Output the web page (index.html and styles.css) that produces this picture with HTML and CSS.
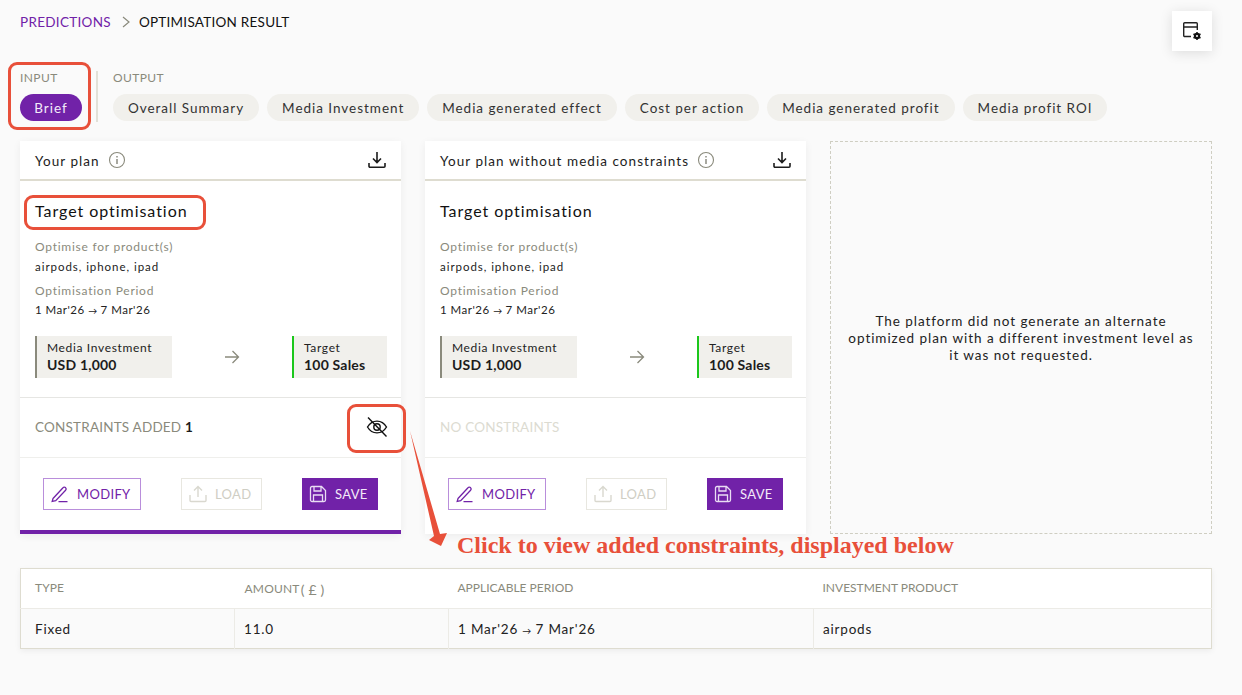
FILE: index.html
```html
<!DOCTYPE html>
<html lang="en">
<head>
<meta charset="utf-8">
<title>Optimisation result</title>
<link rel="stylesheet" href="styles.css">
</head>
<body>
<div class="page">
  <nav class="crumbs">
    <span class="crumb-link">PREDICTIONS</span>
    <svg class="crumb-sep" width="12" height="12" viewBox="0 0 12 12"><path d="M3 1l6 5-6 5" fill="none" stroke="#8a8a7c" stroke-width="1.2"/></svg>
    <span class="crumb-current">OPTIMISATION RESULT</span>
  </nav>
  <button class="float-btn" aria-label="Settings">
    <svg width="20" height="20" viewBox="0 0 20 20"><path d="M9 15.500H2.700a1 1 0 0 1-1-1V2.700a1 1 0 0 1 1-1h11.600a1 1 0 0 1 1 1V9M1.700 6h13.600" fill="none" stroke="#222" stroke-width="1.400"/><circle cx="15" cy="15" r="2.100" fill="none" stroke="#111" stroke-width="2.200"/><path d="M15 11v1.400M15 17.600V19M11.500 13l1.200.7M17.300 16.300l1.200.7M11.500 17l1.200-.7M17.300 13.700l1.200-.7" stroke="#111" stroke-width="1.500"/></svg>
  </button>

  <div class="tabs">
    <div class="tab-group input-group">
      <div class="tab-label">INPUT</div>
      <div class="pills"><span class="pill pill-active">Brief</span></div>
    </div>
    <div class="tab-group output-group">
      <div class="tab-label">OUTPUT</div>
      <div class="pills">
        <span class="pill">Overall Summary</span>
        <span class="pill">Media Investment</span>
        <span class="pill">Media generated effect</span>
        <span class="pill">Cost per action</span>
        <span class="pill">Media generated profit</span>
        <span class="pill">Media profit ROI</span>
      </div>
    </div>
  </div>

  <div class="cards">
    <section class="card card-selected">
      <header class="card-head">
        <span class="card-title">Your plan</span>
        <svg class="info" width="18" height="18" viewBox="0 0 18 18"><circle cx="9" cy="9" r="7.500" fill="none" stroke="#8a8a7c" stroke-width="1.100"/><path d="M9 8v5M9 5v1.400" stroke="#6f6f62" stroke-width="1.200"/></svg>
        <svg class="download" width="18" height="18" viewBox="0 0 18 18"><path d="M9 1v10M5 7.500l4 4 4-4M1 12v3.200a1 1 0 0 0 1 1h14a1 1 0 0 0 1-1V12" fill="none" stroke="#1c1c1c" stroke-width="1.600"/></svg>
      </header>
      <div class="card-body">
        <h2 class="target-title">Target optimisation</h2>
        <div class="meta-label">Optimise for product(s)</div>
        <div class="meta-value">airpods, iphone, ipad</div>
        <div class="meta-label second">Optimisation Period</div>
        <div class="meta-value">1 Mar'26 <span class="to">→</span> 7 Mar'26</div>
        <div class="flow">
          <div class="stat stat-invest"><div class="stat-label">Media Investment</div><div class="stat-value">USD 1,000</div></div>
          <svg class="flow-arrow" width="16" height="14" viewBox="0 0 16 14"><path d="M1 7h13.500M8.500 1l6 6-6 6" fill="none" stroke="#8a8a7c" stroke-width="1.300"/></svg>
          <div class="stat stat-target"><div class="stat-label">Target</div><div class="stat-value">100 Sales</div></div>
        </div>
      </div>
      <div class="constraints">
        <span class="constraints-text">CONSTRAINTS ADDED <b>1</b></span>
        <svg class="eye" width="22" height="22" viewBox="0 0 22 22"><path d="M1.500 11c2.300-3.900 5.500-5.900 9.500-5.900s7.200 2 9.500 5.900c-2.300 3.900-5.500 5.900-9.500 5.900S3.800 14.900 1.500 11z" fill="none" stroke="#111" stroke-width="1.400"/><circle cx="11" cy="11" r="3.200" fill="none" stroke="#111" stroke-width="1.400"/><path d="M2 1.500l18.500 19" stroke="#111" stroke-width="1.400"/></svg>
      </div>
      <div class="actions">
        <button class="btn btn-modify"><svg width="18" height="18" viewBox="0 0 18 18"><path d="M2 13.500L12 2.700a1.700 1.700 0 0 1 2.600 0 1.800 1.800 0 0 1 0 2.500L4.700 15.600l-3.500.8zM7.500 16.700h9" fill="none" stroke="#7122a8" stroke-width="1.300"/></svg>MODIFY</button>
        <button class="btn btn-load"><svg width="18" height="18" viewBox="0 0 18 18"><path d="M9 12V1.500M5 5.500l4-4 4 4M1 10v5.500a1 1 0 0 0 1 1h14a1 1 0 0 0 1-1V10" fill="none" stroke="#d9d8cf" stroke-width="1.400"/></svg>LOAD</button>
        <button class="btn btn-save"><svg width="18" height="18" viewBox="0 0 18 18"><path d="M1.500 3a1.500 1.500 0 0 1 1.500-1.500h9.500l4 4V15a1.500 1.500 0 0 1-1.500 1.500H3A1.500 1.500 0 0 1 1.500 15zM5 1.500V6h7V1.500M4.500 16.500V10h9v6.500" fill="none" stroke="#e9dcf3" stroke-width="1.300"/></svg>SAVE</button>
      </div>
    </section>

    <section class="card">
      <header class="card-head">
        <span class="card-title">Your plan without media constraints</span>
        <svg class="info" width="18" height="18" viewBox="0 0 18 18"><circle cx="9" cy="9" r="7.500" fill="none" stroke="#8a8a7c" stroke-width="1.100"/><path d="M9 8v5M9 5v1.400" stroke="#6f6f62" stroke-width="1.200"/></svg>
        <svg class="download" width="18" height="18" viewBox="0 0 18 18"><path d="M9 1v10M5 7.500l4 4 4-4M1 12v3.200a1 1 0 0 0 1 1h14a1 1 0 0 0 1-1V12" fill="none" stroke="#1c1c1c" stroke-width="1.600"/></svg>
      </header>
      <div class="card-body">
        <h2 class="target-title">Target optimisation</h2>
        <div class="meta-label">Optimise for product(s)</div>
        <div class="meta-value">airpods, iphone, ipad</div>
        <div class="meta-label second">Optimisation Period</div>
        <div class="meta-value">1 Mar'26 <span class="to">→</span> 7 Mar'26</div>
        <div class="flow">
          <div class="stat stat-invest"><div class="stat-label">Media Investment</div><div class="stat-value">USD 1,000</div></div>
          <svg class="flow-arrow" width="16" height="14" viewBox="0 0 16 14"><path d="M1 7h13.500M8.500 1l6 6-6 6" fill="none" stroke="#8a8a7c" stroke-width="1.300"/></svg>
          <div class="stat stat-target"><div class="stat-label">Target</div><div class="stat-value">100 Sales</div></div>
        </div>
      </div>
      <div class="constraints">
        <span class="constraints-none">NO CONSTRAINTS</span>
      </div>
      <div class="actions">
        <button class="btn btn-modify"><svg width="18" height="18" viewBox="0 0 18 18"><path d="M2 13.500L12 2.700a1.700 1.700 0 0 1 2.600 0 1.800 1.800 0 0 1 0 2.500L4.700 15.600l-3.500.8zM7.500 16.700h9" fill="none" stroke="#7122a8" stroke-width="1.300"/></svg>MODIFY</button>
        <button class="btn btn-load"><svg width="18" height="18" viewBox="0 0 18 18"><path d="M9 12V1.500M5 5.500l4-4 4 4M1 10v5.500a1 1 0 0 0 1 1h14a1 1 0 0 0 1-1V10" fill="none" stroke="#d9d8cf" stroke-width="1.400"/></svg>LOAD</button>
        <button class="btn btn-save"><svg width="18" height="18" viewBox="0 0 18 18"><path d="M1.500 3a1.500 1.500 0 0 1 1.500-1.500h9.500l4 4V15a1.500 1.500 0 0 1-1.500 1.500H3A1.500 1.500 0 0 1 1.500 15zM5 1.500V6h7V1.500M4.500 16.500V10h9v6.500" fill="none" stroke="#e9dcf3" stroke-width="1.300"/></svg>SAVE</button>
      </div>
    </section>

    <aside class="empty-plan">
      <p>The platform did not generate an alternate optimized plan with a different investment level as it was not requested.</p>
    </aside>
  </div>

  <table class="ctable">
    <thead>
      <tr><th class="c1">TYPE</th><th class="c2">AMOUNT<span class="unit">( £ )</span></th><th class="c3">APPLICABLE PERIOD</th><th>INVESTMENT PRODUCT</th></tr>
    </thead>
    <tbody>
      <tr><td>Fixed</td><td>11.0</td><td>1 Mar'26 <span class="to">→</span> 7 Mar'26</td><td>airpods</td></tr>
    </tbody>
  </table>

  <div class="mark mark-input"></div>
  <div class="mark mark-target"></div>
  <div class="mark mark-eye"></div>
  <svg class="callout-arrow" width="50" height="125" viewBox="0 0 50 125"><polygon points="1,0 31,103 38,102 32,115 20,109 25,105" fill="#e8503a"/></svg>
  <div class="callout-text">Click to view added constraints, displayed below</div>
</div>
</body>
</html>
```

FILE: styles.css
```css
* { box-sizing: border-box; }
html, body { margin: 0; height: 100%; }
body {
  background: #fafafa;
  color: #1c1c1c;
  font-family: Lato, "Open Sans", sans-serif;
  overflow: hidden;
}
.page {
  position: relative;
  width: 1242px;
  height: 695px;
  padding: 13px 30px 0 20px;
}
.crumbs {
  display: flex;
  align-items: center;
  gap: 7px;
  height: 17px;
  font-size: 13.5px;
  letter-spacing: 0.3px;
}
.crumb-link { color: #7122a8; margin-right: 2px; }
.crumb-current { color: #111; letter-spacing: 0.25px; }

.float-btn {
  position: absolute;
  left: 1172px;
  top: 11px;
  width: 40px;
  height: 40px;
  padding: 0;
  display: flex;
  align-items: center;
  justify-content: center;
  border: 0;
  background: #fff;
  box-shadow: 0 2px 12px rgba(0, 0, 0, .12);
}

.tabs {
  display: flex;
  margin-top: 41px;
  height: 51px;
}
.tab-group { display: flex; flex-direction: column; }
.input-group {
  width: 78px;
  border-right: 2px solid #e2e1d8;
  margin-right: 15px;
}
.tab-label {
  font-size: 12px;
  letter-spacing: 0.4px;
  line-height: 14px;
  color: #8a8a7c;
}
.pills { display: flex; gap: 8px; margin-top: 9px; }
.pill {
  display: flex;
  align-items: center;
  justify-content: center;
  height: 27px;
  padding: 0 15px;
  border-radius: 14px;
  background: #f1f0ec;
  color: #333;
  font-size: 13.5px;
  letter-spacing: 0.97px;
  white-space: nowrap;
}
.pill-active {
  width: 62px;
  padding: 0;
  background: #7122a8;
  color: #f3eaf9;
}

.cards {
  display: grid;
  grid-template-columns: 381px 381px 382px;
  gap: 24px;
  margin-top: 19px;
  height: 393px;
}
.card {
  display: flex;
  flex-direction: column;
  background: #fff;
  box-shadow: 0 2px 8px rgba(0, 0, 0, .06);
}
.card-selected { border-bottom: 4px solid #7122a8; }
.card-head {
  display: flex;
  align-items: center;
  height: 40px;
  padding: 0 15px;
  border-bottom: 2px solid #dedcd0;
}
.card-title { font-size: 13.5px; letter-spacing: 1.05px; padding-top: 1px; }
.info { margin-left: 8px; }
.download { margin-left: auto; }
.card-body {
  height: 217px;
  padding: 20px 14px 0 15px;
  border-bottom: 1px solid #e6e6e3;
}
.target-title {
  margin: 0;
  font-size: 16px;
  line-height: 20px;
  font-weight: 400;
  letter-spacing: 0.95px;
  color: #111;
}
.meta-label {
  margin-top: 18px;
  font-size: 12px;
  line-height: 15px;
  letter-spacing: 0.75px;
  color: #8a8a7c;
}
.meta-label.second { margin-top: 9px; }
.meta-value {
  margin-top: 6px;
  font-size: 11.5px;
  line-height: 14px;
  letter-spacing: 0.95px;
  color: #222;
}
.meta-label.second + .meta-value { margin-top: 5px; letter-spacing: 0.5px; }
.to { font-size: 9px; letter-spacing: 0; }
.flow {
  display: flex;
  align-items: center;
  justify-content: space-between;
  margin-top: 18px;
  height: 42px;
}
.stat {
  height: 42px;
  padding: 5px 10px;
  background: #f1f0ec;
}
.stat-invest { width: 137px; border-left: 2px solid #8a8a7c; }
.stat-target { width: 95px; border-left: 2px solid #1cc71c; }
.stat-label { font-size: 12px; line-height: 14px; letter-spacing: 0.65px; color: #222; }
.stat-value { margin-top: 1px; font-size: 14px; line-height: 17px; font-weight: 700; letter-spacing: 0.2px; color: #1c1c1c; }

.constraints {
  display: flex;
  align-items: center;
  justify-content: space-between;
  height: 60px;
  padding: 0 13px 2px 15px;
  border-bottom: 1px solid #efefec;
  font-size: 13.5px;
  letter-spacing: 0.2px;
}
.constraints-text { color: #8a8a7c; }
.constraints-text b { color: #1c1c1c; }
.constraints-none { color: #dcdbd1; }

.actions {
  display: flex;
  align-items: flex-start;
  justify-content: space-between;
  padding: 20px 23px 0;
  flex: 1;
}
.btn {
  display: flex;
  align-items: center;
  justify-content: flex-start;
  gap: 8px;
  height: 32px;
  padding: 0 0 0 7px;
  font-family: inherit;
  font-size: 13px;
  letter-spacing: 0.35px;
}
.btn-modify { width: 98px; background: #fff; border: 1px solid #b98edb; color: #7122a8; }
.btn-load { width: 81px; background: #fff; border: 1px solid #e8e7e0; color: #cfcec4; }
.btn-save { width: 76px; background: #7122a8; border: 0; color: #f3eaf9; }

.empty-plan {
  display: flex;
  align-items: center;
  justify-content: center;
  padding: 2px 16px 0;
  border: 1px dashed #cfcec2;
  background: #fafafa;
}
.empty-plan p {
  margin: 0;
  text-align: center;
  font-size: 13.5px;
  line-height: 17px;
  letter-spacing: 0.95px;
  color: #222;
}

.ctable {
  width: 1192px;
  margin-top: 34px;
  border-collapse: collapse;
  table-layout: fixed;
  border: 1px solid #dedcd0;
  box-shadow: 0 2px 6px rgba(0, 0, 0, .06);
}
.ctable th {
  height: 40px;
  padding: 0 0 3px 14px;
  text-align: left;
  background: #fff;
  font-size: 12px;
  font-weight: 400;
  letter-spacing: 0;
  color: #8a8a7c;
  border-bottom: 1px solid #ecebe6;
}
.ctable th.c1 { width: 214px; letter-spacing: 0.1px; }
.ctable th.c2 { width: 214px; padding-left: 10px; letter-spacing: 0.2px; }
.ctable th.c3 { width: 365px; padding-left: 9px; }
.ctable th:last-child { padding-left: 9px; }
.ctable td {
  height: 40px;
  padding: 0 0 0 9px;
  background: #fafafa;
  font-size: 13.5px;
  letter-spacing: 0.8px;
  color: #222;
  border-right: 1px solid #ecebe6;
}
.ctable td:first-child { padding-left: 14px; }
.ctable td:last-child { border-right: 0; }
.unit { font-size: 14px; margin-left: 1px; position: relative; top: 2px; }

.mark {
  position: absolute;
  border: 3px solid #e8503a;
  border-radius: 9px;
  pointer-events: none;
}
.mark-input { left: 8px; top: 62px; width: 83px; height: 68px; }
.mark-target { left: 24px; top: 195px; width: 182px; height: 35px; }
.mark-eye { left: 347px; top: 404px; width: 59px; height: 49px; }
.callout-arrow { position: absolute; left: 409px; top: 431px; }
.callout-text {
  position: absolute;
  left: 457px;
  top: 531px;
  font-family: "Liberation Serif", serif;
  font-weight: 700;
  font-size: 24px;
  line-height: 28px;
  color: #e8503a;
  white-space: nowrap;
}
```
